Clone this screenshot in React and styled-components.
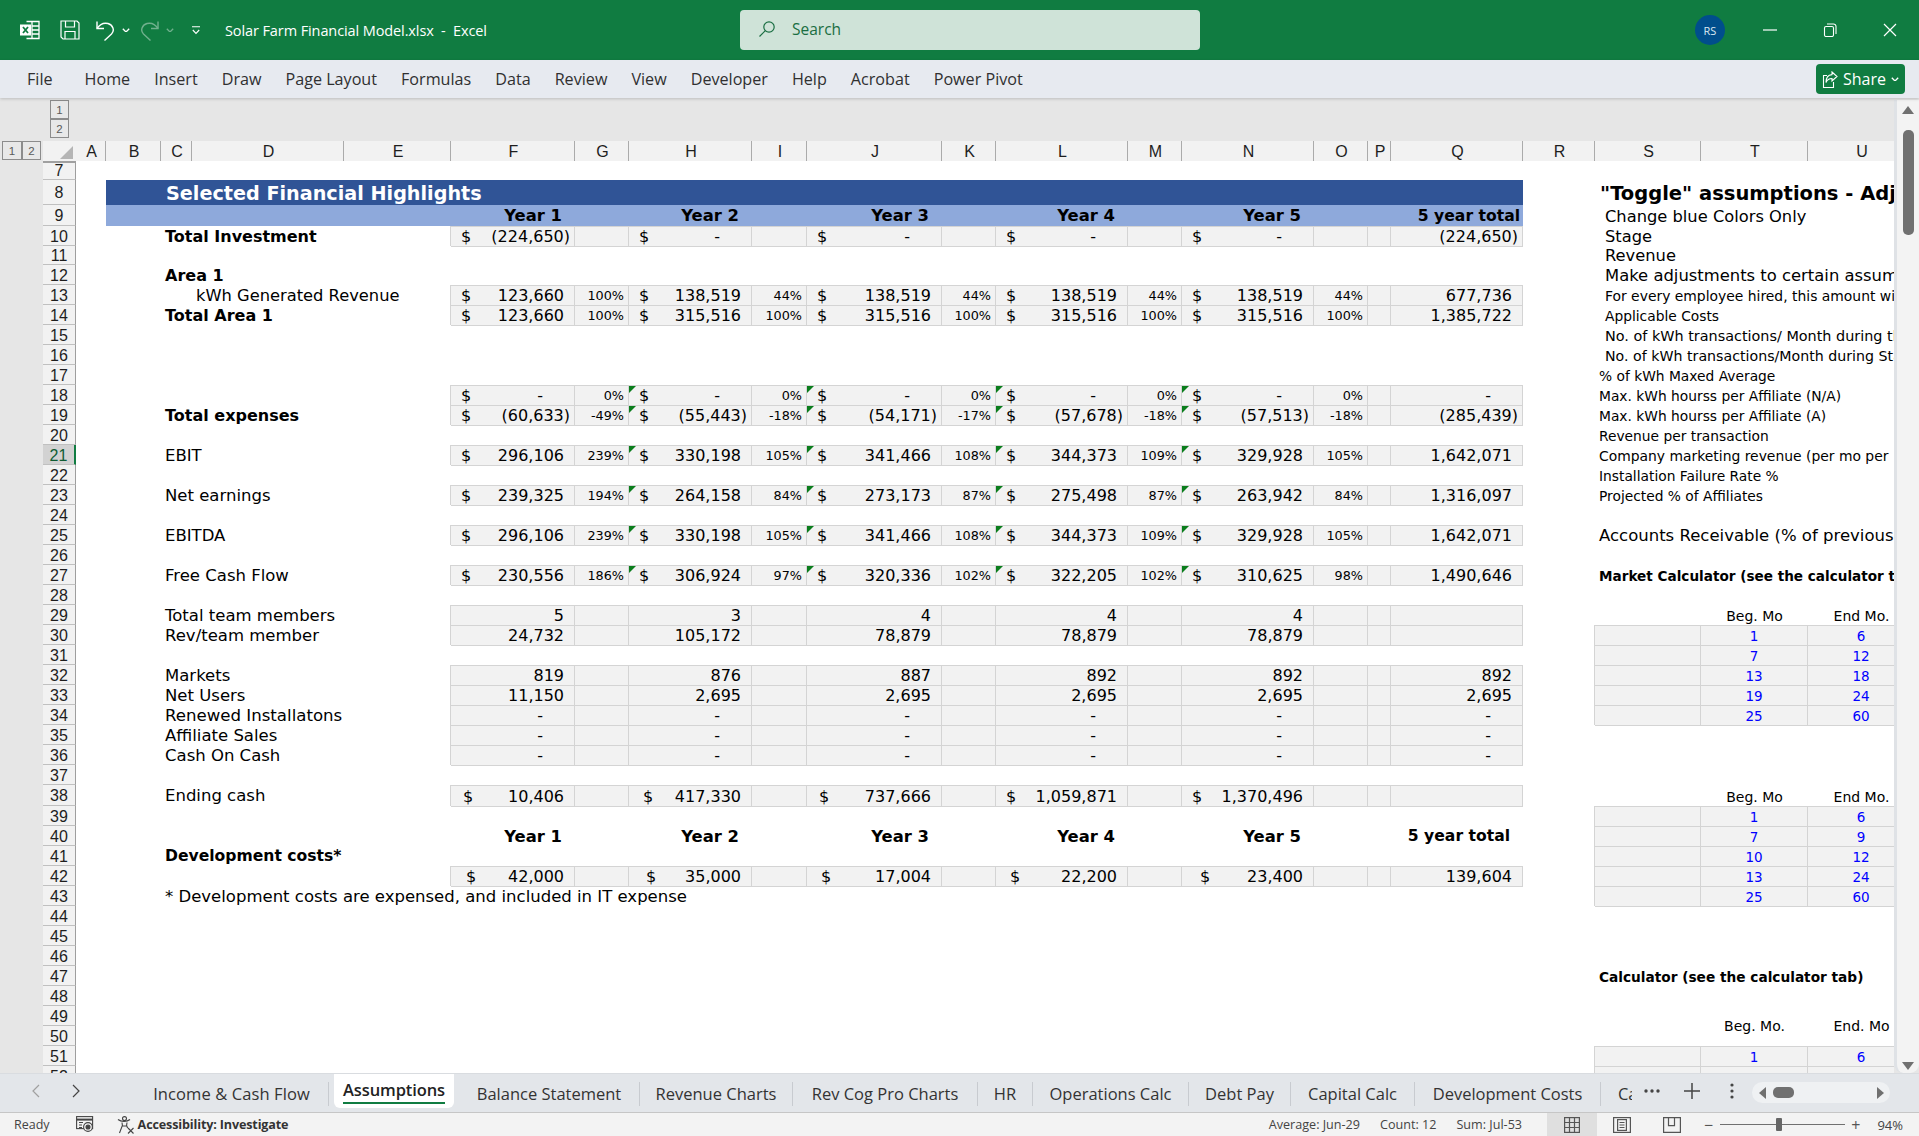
import React from 'react';
import styled, { createGlobalStyle } from 'styled-components';

const GlobalStyle = createGlobalStyle`
  html, body { margin: 0; padding: 0; width: 1919px; height: 1136px; overflow: hidden; background: #fff; }
  * { box-sizing: border-box; }
`;

const UI = `"Open Sans", "Noto Sans", sans-serif`;
const SHEET = `"DejaVu Sans", Verdana, sans-serif`;
const HEAD = `"Liberation Sans", Arial, sans-serif`;
const GREEN = '#107c41';

const COLS = ['A','B','C','D','E','F','G','H','I','J','K','L','M','N','O','P','Q','R','S','T','U'];
const WIDTHS = [30,55,31,152,107,124,54,123,55,135,54,132,54,132,54,23,132,72,106,107,107];
const TEMPLATE = `43px 33px ${WIDTHS.map((w) => `${w}px`).join(' ')}`;
const idx = (c) => COLS.indexOf(c) + 3;

const Page = styled.div`
  width: 1919px; height: 1136px; display: flex; flex-direction: column; overflow: hidden; background: #fff;
`;

/* Title bar */
const TitleBar = styled.header`
  height: 60px; flex: none; background: ${GREEN}; display: flex; align-items: center; color: #fff; padding-left: 20px;
`;
const QuickIcons = styled.div`
  display: flex; align-items: center; width: 205px; flex: none;
`;
const IconSlot = styled.span`
  display: inline-flex; align-items: center; justify-content: center; flex: none;
  width: ${(p) => p.$w}px; margin-left: ${(p) => p.$ml || 0}px; margin-right: ${(p) => p.$mr || 0}px; opacity: ${(p) => p.$dim ? 0.4 : 1};
`;
const DocTitle = styled.div`
  font: 400 14.5px ${UI}; width: 515px; flex: none; white-space: pre; letter-spacing: -0.1px;
`;
const SearchBox = styled.div`
  width: 460px; height: 40px; flex: none; background: #cfe3d8; border-radius: 4px; display: flex; align-items: center;
  padding: 0 0 2px 18px; gap: 16px; color: #1a6e42; font: 400 15.5px ${UI};
`;
const Avatar = styled.div`
  width: 30px; height: 30px; border-radius: 50%; background: #004e8c; color: #dbe8f3; font: 400 11px ${UI};
  display: flex; align-items: center; justify-content: center; margin-left: 495px; flex: none;
`;
const WinButtons = styled.div`
  display: flex; align-items: center; margin-left: 38px; gap: 46px;
`;

/* Ribbon */
const Ribbon = styled.nav`
  height: 38px; flex: none; background: #e7eaf0; display: flex; align-items: center; padding-left: 27px; gap: 24px;
  font: 400 16.15px ${UI}; color: #303030; position: relative; box-shadow: 0 1px 3px rgba(0,0,0,.18); z-index: 2;
`;
const RibbonTab = styled.span`
  margin-right: ${(p) => p.$mr || 0}px; white-space: nowrap;
`;
const ShareButton = styled.button`
  margin-left: auto; margin-right: 14px; width: 89px; height: 30px; background: ${GREEN}; color: #fff; border: 0; border-radius: 4px;
  display: flex; align-items: center; justify-content: center; gap: 5px; padding: 0; font: 400 16px ${UI};
`;

/* Sheet */
const Main = styled.main`
  height: 975px; flex: none; display: flex; background: #e6e6e6;
`;
const SheetArea = styled.section`
  width: 1894px; flex: none; display: flex; flex-direction: column; overflow: hidden;
`;
const OutlineBar = styled.div`
  height: 43px; flex: none; padding: 2px 0 0 50px; display: flex; flex-direction: column;
`;
const OutlineBtn = styled.span`
  width: ${(p) => p.$w || 19}px; height: ${(p) => p.$h || 19}px; border: 1px solid #8c8c8c; background: #e8e8e8; color: #5a5a5a;
  font: 400 11.5px ${HEAD}; display: flex; align-items: center; justify-content: center; flex: none;
`;
const ColHeadRow = styled.div`
  height: 20px; flex: none; display: grid; grid-template-columns: ${TEMPLATE}; background: #e6e6e6;
`;
const OutlinePair = styled.div`
  display: flex; padding-left: 2px; height: 19px;
`;
const Corner = styled.div`
  background: #f2f2f2; border-bottom: 2px solid #a0a0a0; position: relative; overflow: hidden;
  &::after { content: ''; position: absolute; right: 3px; bottom: 2px; width: 0; height: 0;
    border-left: 13px solid transparent; border-bottom: 13px solid #b5b5b5; }
`;
const ColHead = styled.div`
  background: #f2f2f2; border-right: 1px solid #ababab; border-bottom: 2px solid #a0a0a0; color: #1e1e1e;
  font: 400 16px ${HEAD}; display: flex; align-items: center; justify-content: center; padding: 2px 0 0 2px;
`;
const Body = styled.div`
  flex: 1; min-height: 0; overflow: hidden; background: #fff; display: flex; flex-direction: column;
`;
const Row = styled.div`
  height: ${(p) => p.$h}px; flex: none; display: grid; grid-template-columns: ${TEMPLATE}; grid-template-rows: ${(p) => p.$h}px;
`;
const Gutter = styled.div`
  grid-column: 1; background: #e6e6e6;
`;
const RowNum = styled.div`
  grid-column: 2; grid-row: 1; background: ${(p) => p.$sel ? '#d2d2d2' : '#f2f2f2'}; color: ${(p) => p.$sel ? '#0f5c33' : '#1e1e1e'};
  border-bottom: 1px solid #c0c0c0; border-right: ${(p) => p.$sel ? `2px solid ${GREEN}` : '1px solid #9e9e9e'};
  font: 400 16px/${(p) => p.$h + 1}px ${HEAD}; text-align: center;
`;
const Cell = styled.div`
  grid-column: ${(p) => p.$col} / span ${(p) => p.$span || 1};
  grid-row: 1;
  position: relative; white-space: nowrap; min-width: 0; height: 100%;
  display: flex; align-items: center; justify-content: ${(p) => p.$just || 'flex-start'};
  padding: ${(p) => p.$pt ?? 2}px ${(p) => p.$pr ?? 0}px 0 ${(p) => p.$pl ?? 0}px;
  font: ${(p) => p.$bold ? 700 : 400} ${(p) => p.$size || 16}px/1 ${SHEET};
  color: ${(p) => p.$color || '#000'};
  background: ${(p) => p.$fill || 'transparent'};
  ${(p) => p.$grid && `
    background: #f2f2f2;
    border-right: 1px solid #d4d4d4;
    box-shadow: inset 0 1px 0 #d4d4d4, 0 1px 0 #d4d4d4, -1px 0 0 #d4d4d4;
  `}
  ${(p) => p.$tall && `align-items: flex-start; height: 40px; padding-top: 13px; overflow: visible;`}
`;
const Flag = styled.i`
  position: absolute; left: 0; top: 1px; width: 0; height: 0; z-index: 2;
  border-top: 7px solid #0a7d1c; border-right: 7px solid transparent;
`;
const Dollar = styled.span`
  flex: none;
`;
const Amount = styled.span`
  margin-left: auto;
`;

/* scroll */
const VScroll = styled.aside`
  width: 25px; flex: none; background: #f3f3f3; border-left: 3px solid #dfe2e6; margin-top: 2px; border-radius: 0 0 9px 9px;
  display: flex; flex-direction: column; align-items: center; padding-top: 6px;
`;
const VThumb = styled.div`
  width: 11px; height: 105px; background: #707070; border-radius: 5px; margin-top: 16px;
`;
const Arrow = styled.i`
  width: 0; height: 0; flex: none; display: block;
  border-left: 6px solid transparent; border-right: 6px solid transparent;
  ${(p) => p.$down ? 'border-top: 8px solid #707070; margin-top: auto; margin-bottom: 3px;' : 'border-bottom: 8px solid #707070;'}
`;

/* Tabs */
const TabBar = styled.div`
  height: 40px; flex: none; background: #e3e6ea; border-top: 1px solid #d9dce0; border-bottom: 1px solid #c6c6c6; display: flex; position: relative;
`;
const TabNav = styled.div`
  width: 135px; flex: none; display: flex; align-items: center; padding: 0 0 4px 32px; gap: 32px;
`;
const Tabs = styled.div`
  width: 1497px; flex: none; display: flex; overflow: hidden; align-items: flex-start;
`;
const SheetTab = styled.div`
  flex: none; width: ${(p) => p.$w}px; height: 24px; margin-top: 8px; border-right: 1px solid #c8cbd0; color: #333; text-align: center;
  font: 400 16.5px/24px ${UI}; white-space: nowrap; letter-spacing: ${(p) => p.$ls ?? -0.1}px;
`;
const LastTab = styled.div`
  flex: none; height: 24px; margin-top: 8px; padding-left: 17px; color: #333;
  font: 400 16.5px/24px ${UI}; white-space: nowrap; letter-spacing: -0.1px;
`;
const ActiveTab = styled.div`
  flex: none; width: 120px; height: 35px; margin: -1px 5px 0 5px; background: #fff; border-radius: 0 0 6px 6px; text-align: center;
  color: #222; font: 600 16.5px/33px ${UI}; white-space: nowrap; position: relative; letter-spacing: -0.1px;
  &::after { content: ''; position: absolute; left: 9px; right: 9px; bottom: 4px; height: 2px; background: ${GREEN}; }
`;
const TabTools = styled.div`
  flex: 1; display: flex; align-items: center; padding-bottom: 4px; position: relative;
`;
const Pill = styled.div`
  position: absolute; right: 29px; top: 8px; width: 138px; height: 21px; border-radius: 11px; background: #eff1f3;
  display: flex; align-items: center; padding: 0 6px 0 7px;
`;
const HThumb = styled.div`
  width: 21px; height: 11px; background: #707070; border-radius: 5px; margin-left: 7px;
`;
const HArrow = styled.i`
  width: 0; height: 0; display: block; flex: none;
  border-top: 6px solid transparent; border-bottom: 6px solid transparent;
  ${(p) => p.$right ? 'border-left: 7px solid #707070; margin-left: auto;' : 'border-right: 7px solid #707070;'}
`;
const DotsIcon = styled.svg`
  margin-left: ${(p) => p.$ml}px; flex: none;
`;

/* Status */
const StatusBar = styled.footer`
  height: 23px; flex: none; background: #f3f3f3; display: flex; align-items: center; font: 400 12.5px ${UI}; color: #444; padding-left: 14px; position: relative;
`;
const StatusBold = styled.span`
  font-weight: 700; color: #333; letter-spacing: -0.15px; font-size: 12.6px;
`;
const StatusGroup = styled.div`
  display: flex; align-items: center; margin-left: auto; height: 100%; font-size: 12.6px;
`;
const Stat = styled.span`
  margin-right: ${(p) => p.$mr}px;
`;
const ViewBtn = styled.span`
  width: 50px; height: 100%; display: flex; align-items: center; justify-content: center; flex: none;
  background: ${(p) => p.$on ? '#dfdfdf' : 'transparent'};
`;
const Zoom = styled.div`
  display: flex; align-items: center; margin-left: 7px; color: #555; font-size: 16px; line-height: 1;
`;
const Slider = styled.div`
  width: 125px; height: 1px; background: #707070; position: relative; margin: 0 6px 0 7px;
`;
const SliderThumb = styled.i`
  position: absolute; left: 56px; top: -6px; width: 6px; height: 13px; background: #666; border-radius: 1px;
`;
const Percent = styled.span`
  margin: 0 16px 0 17px; color: #444; font-size: 13px;
`;

/* ---------- icons ---------- */
const ExcelLogo = () => (
  <svg width="20" height="20" viewBox="0 0 20 20" fill="none">
    <path d="M6.5 1.5H19v17H6.5" stroke="#fff" strokeWidth="1.3" />
    <path d="M12 1.5v17M12 6h7M12 10h7M12 14h7" stroke="#fff" strokeWidth="1.3" />
    <rect x="0" y="4.5" width="11" height="11" fill="#fff" />
    <path d="M3 7l5 6M8 7l-5 6" stroke={GREEN} strokeWidth="1.8" />
  </svg>
);
const SaveIcon = () => (
  <svg width="20" height="20" viewBox="0 0 20 20" fill="none" stroke="#fff" strokeWidth="1.2">
    <path d="M1 1h16l2 2v16H3l-2-2z" />
    <path d="M5.5 1v6h9V1M5 19v-7.5h10V19" />
  </svg>
);
const UndoIcon = ({ flip }) => (
  <svg width="19" height="21" viewBox="0 0 19 21" fill="none" stroke="#fff" strokeWidth="1.4" style={flip ? { transform: 'scaleX(-1)' } : undefined}>
    <path d="M1 1.5v7h7" />
    <path d="M1 8.5C4 4 8 2.5 12 3.5c5 1.5 7 7 3.5 10.5L8.5 20.5" />
  </svg>
);
const Chevron = ({ size = 8, color = '#fff', sw = 1.3 }) => (
  <svg width={size} height={size * 0.6} viewBox="0 0 10 6" fill="none" stroke={color} strokeWidth={sw * 10 / size}>
    <path d="M1 1l4 4 4-4" />
  </svg>
);
const CustomizeIcon = () => (
  <svg width="10" height="9" viewBox="0 0 10 9" fill="none" stroke="#fff" strokeWidth="1.1">
    <path d="M1 .8h8M1.8 4l3.2 3.4L8.2 4" />
  </svg>
);
const SearchIcon = () => (
  <svg width="18" height="18" viewBox="0 0 18 18" fill="none" stroke="#1a6e42" strokeWidth="1.2">
    <circle cx="11" cy="7" r="5.2" />
    <path d="M7.3 10.7L1.5 16.5" />
  </svg>
);
const MinIcon = () => <svg width="14" height="2" viewBox="0 0 14 2"><path d="M0 1h14" stroke="#fff" strokeWidth="1.2" /></svg>;
const RestoreIcon = () => (
  <svg width="14" height="14" viewBox="0 0 14 14" fill="none" stroke="#fff" strokeWidth="1.1">
    <rect x="1.5" y="3.5" width="9" height="10" rx="1.5" />
    <path d="M4 1h6.5a2.5 2.5 0 0 1 2.5 2.5V11" />
  </svg>
);
const CloseIcon = () => (
  <svg width="14" height="14" viewBox="0 0 14 14" stroke="#fff" strokeWidth="1.2"><path d="M1 1l12 12M13 1L1 13" /></svg>
);
const ShareIcon = () => (
  <svg width="16" height="17" viewBox="0 0 16 17" fill="none" stroke="#fff" strokeWidth="1.1">
    <path d="M5 4.5H1.5v12h10V11" />
    <path d="M10 1l5 4.5L10 10V7.5C7 7.5 5 9 4 11.5 4 7 6 3.8 10 3.6z" />
  </svg>
);
const NavArrow = ({ dir, color }) => (
  <svg width="8" height="14" viewBox="0 0 8 14" fill="none" stroke={color} strokeWidth="1.2">
    <path d={dir === 'l' ? 'M7 1L1 7l6 6' : 'M1 1l6 6-6 6'} />
  </svg>
);
const MacroIcon = () => (
  <svg width="18" height="17" viewBox="0 0 18 17" fill="none" stroke="#444" strokeWidth="1.1">
    <rect x=".6" y=".6" width="16" height="12" />
    <path d="M.6 3.6h16" strokeWidth="2" />
    <path d="M3 6.5h4M3 9h3M3 11.5h3" />
    <circle cx="12" cy="11" r="4.4" fill="#f3f3f3" />
    <circle cx="12" cy="11" r="2" fill="#444" />
  </svg>
);
const AccessIcon = () => (
  <svg width="18" height="18" viewBox="0 0 18 18" fill="none" stroke="#444" strokeWidth="1.1">
    <circle cx="7.5" cy="2.6" r="2" />
    <path d="M1 3.5c3 2.6 9 2.6 12 0M5 6.5l.4 3L2.5 17M10 6.5l-.4 3 1 2.5M5.5 10h4" />
    <path d="M11 12l5.5 5.5M16.5 12L11 17.5" />
  </svg>
);
const GridIcon = () => (
  <svg width="16" height="16" viewBox="0 0 16 16" fill="none" stroke="#555" strokeWidth="1.2">
    <rect x=".6" y=".6" width="14.8" height="14.8" />
    <path d="M5.5 .6v14.8M10.5 .6v14.8M.6 5.5h14.8M.6 10.5h14.8" />
  </svg>
);
const PageIcon = () => (
  <svg width="18" height="16" viewBox="0 0 18 16" fill="none" stroke="#555" strokeWidth="1.2">
    <rect x=".6" y=".6" width="16.8" height="14.8" />
    <rect x="4.6" y="2.6" width="8.8" height="10.8" />
    <path d="M6.5 5.5h5M6.5 8h5M6.5 10.5h5" />
  </svg>
);
const BreakIcon = () => (
  <svg width="18" height="16" viewBox="0 0 18 16" fill="none" stroke="#555" strokeWidth="1.2">
    <path d="M.6 15.4V.6h16.8v14.8z" />
    <path d="M5.5 .6v8h6V.6" />
  </svg>
);

/* ---------- data ---------- */
const MONEY = ['F', 'H', 'J', 'L', 'N'];
const PCT = ['G', 'I', 'K', 'M', 'O'];
const BLOCK = ['F','G','H','I','J','K','L','M','N','O','P','Q'];
const pad = (v) => (v === '-' ? 31 : v.endsWith(')') ? 4 : 10);

const numbers = {
  10: { m: ['(224,650)', '-', '-', '-', '-'], q: '(224,650)' },
  13: { m: ['123,660', '138,519', '138,519', '138,519', '138,519'], p: ['100%', '44%', '44%', '44%', '44%'], q: '677,736' },
  14: { m: ['123,660', '315,516', '315,516', '315,516', '315,516'], p: ['100%', '100%', '100%', '100%', '100%'], q: '1,385,722' },
  18: { m: ['-', '-', '-', '-', '-'], p: ['0%', '0%', '0%', '0%', '0%'], q: '-', flags: true },
  19: { m: ['(60,633)', '(55,443)', '(54,171)', '(57,678)', '(57,513)'], p: ['-49%', '-18%', '-17%', '-18%', '-18%'], q: '(285,439)', flags: true },
  21: { m: ['296,106', '330,198', '341,466', '344,373', '329,928'], p: ['239%', '105%', '108%', '109%', '105%'], q: '1,642,071', flags: true },
  23: { m: ['239,325', '264,158', '273,173', '275,498', '263,942'], p: ['194%', '84%', '87%', '87%', '84%'], q: '1,316,097', flags: true },
  25: { m: ['296,106', '330,198', '341,466', '344,373', '329,928'], p: ['239%', '105%', '108%', '109%', '105%'], q: '1,642,071', flags: true },
  27: { m: ['230,556', '306,924', '320,336', '322,205', '310,625'], p: ['186%', '97%', '102%', '102%', '98%'], q: '1,490,646', flags: true },
  29: { m: ['5', '3', '4', '4', '4'], q: '', plain: true },
  30: { m: ['24,732', '105,172', '78,879', '78,879', '78,879'], q: '', plain: true },
  32: { m: ['819', '876', '887', '892', '892'], q: '892', plain: true },
  33: { m: ['11,150', '2,695', '2,695', '2,695', '2,695'], q: '2,695', plain: true },
  34: { m: ['-', '-', '-', '-', '-'], q: '-', plain: true },
  35: { m: ['-', '-', '-', '-', '-'], q: '-', plain: true },
  36: { m: ['-', '-', '-', '-', '-'], q: '-', plain: true },
  38: { m: ['10,406', '417,330', '737,666', '1,059,871', '1,370,496'], q: '', dollarPad: [12, 14, 12, 10, 10] },
  42: { m: ['42,000', '35,000', '17,004', '22,200', '23,400'], q: '139,604', dollarPad: [15, 17, 14, 14, 18] },
};

const labels = {
  10: ['C', 'Total Investment', 16, true], 12: ['C', 'Area 1', 16, true], 13: ['D', 'kWh Generated Revenue', 16.3],
  14: ['C', 'Total Area 1', 16, true], 19: ['C', 'Total expenses', 16, true], 21: ['C', 'EBIT', 16.5], 23: ['C', 'Net earnings', 16.5],
  25: ['C', 'EBITDA', 16.5], 27: ['C', 'Free Cash Flow', 16.5], 29: ['C', 'Total team members', 16.5], 30: ['C', 'Rev/team member', 16.5],
  32: ['C', 'Markets', 16.5], 33: ['C', 'Net Users', 16.5], 34: ['C', 'Renewed Installatons', 16.6], 35: ['C', 'Affiliate Sales', 16.5],
  36: ['C', 'Cash On Cash', 16.5], 38: ['C', 'Ending cash', 16.5], 41: ['C', 'Development costs*', 15.6, true],
  43: ['C', '* Development costs are expensed, and included in IT expense', 16.5],
};

const side = {
  8: ['"Toggle" assumptions - Adjustments', 5, 19.5, true, 2],
  9: ['Change blue Colors Only', 10, 16.3, false, 3],
  10: ['Stage', 10, 16.3, false, 2],
  11: ['Revenue', 10, 16.3, false, 1],
  12: ['Make adjustments to certain assumptions', 10, 16.4, false, 2],
  13: ['For every employee hired, this amount will', 10, 13.9, false, 3],
  14: ['Applicable Costs', 10, 13.8, false, 3],
  15: ['No. of kWh transactions/ Month during the', 10, 14.4, false, 3],
  16: ['No. of kWh transactions/Month during Stage', 10, 14.2, false, 3],
  17: ['% of kWh Maxed Average', 4, 13.8, false, 4],
  18: ['Max. kWh hourss per Affiliate (N/A)', 4, 13.8, false, 3],
  19: ['Max. kWh hourss per Affiliate (A)', 4, 13.8, false, 4],
  20: ['Revenue per transaction', 4, 13.8, false, 3],
  21: ['Company marketing revenue (per mo per', 4, 13.9, false, 3],
  22: ['Installation Failure Rate %', 4, 13.8, false, 3],
  23: ['Projected % of Affiliates', 4, 13.8, false, 3],
  25: ['Accounts Receivable (% of previous month)', 4, 16.5, false, 3],
  27: ['Market Calculator (see the calculator tab)', 4, 13.6, true, 3],
  47: ['Calculator (see the calculator tab)', 4, 13.7, true, 3],
};

const tables = {
  30: ['1', '6'], 31: ['7', '12'], 32: ['13', '18'], 33: ['19', '24'], 34: ['25', '60'],
  39: ['1', '6'], 40: ['7', '9'], 41: ['10', '12'], 42: ['13', '24'], 43: ['25', '60'],
  51: ['1', '6'], 52: ['', ''],
};
const tableHeads = { 29: ['Beg. Mo', 'End Mo.'], 38: ['Beg. Mo', 'End Mo.'] };

const rowHeight = (n) => {
  if (n === 7) return 19;
  if (n === 8) return 25;
  if (n === 9) return 21;
  if (n === 11) return 19;
  if (n === 38) return 21;
  return 20;
};

const YEARS = ['Year 1', 'Year 2', 'Year 3', 'Year 4', 'Year 5'];

const renderNumbers = (n) => {
  const d = numbers[n];
  if (!d) return null;
  return BLOCK.map((c) => {
    const mi = MONEY.indexOf(c);
    const pi = PCT.indexOf(c);
    if (mi >= 0) {
      const v = d.m[mi];
      return (
        <Cell key={c} $grid $col={idx(c)} $pl={d.dollarPad ? d.dollarPad[mi] : 10} $pr={pad(v)}>
          {d.flags && mi > 0 && <Flag />}
          {!d.plain && <Dollar>$</Dollar>}
          <Amount>{v}</Amount>
        </Cell>
      );
    }
    if (pi >= 0) {
      return (
        <Cell key={c} $grid $col={idx(c)} $size={12.8} $pr={4} $pt={3} $just="flex-end">{d.p ? d.p[pi] : ''}</Cell>
      );
    }
    if (c === 'Q') {
      return <Cell key={c} $grid $col={idx(c)} $pr={d.q ? pad(d.q) : 0} $just="flex-end">{d.q}</Cell>;
    }
    return <Cell key={c} $grid $col={idx(c)} />;
  });
};

const renderRow = (n) => {
  const label = labels[n];
  const s = side[n];
  const t = tables[n];
  const th = tableHeads[n];
  const h = rowHeight(n);
  return (
    <Row key={n} $h={h}>
      <Gutter />
      <RowNum $sel={n === 21} $h={h}>{n}</RowNum>
      {n === 8 && (
        <Cell $col={idx('B')} $span={16} $fill="#305496" $color="#fff" $bold $size={19.2} $pl={60} $pt={3}>Selected Financial Highlights</Cell>
      )}
      {n === 9 && (
        <>
          <Cell $col={idx('B')} $span={4} $fill="#8ea9db" />
          {BLOCK.map((c) => {
            const mi = MONEY.indexOf(c);
            if (mi >= 0) return <Cell key={c} $col={idx(c)} $fill="#8ea9db" $bold $size={16.4} $just="flex-end" $pr={13}>{YEARS[mi]}</Cell>;
            if (c === 'Q') return <Cell key={c} $col={idx(c)} $fill="#8ea9db" $bold $size={15.6} $just="flex-end" $pr={3}>5 year total</Cell>;
            return <Cell key={c} $col={idx(c)} $fill="#8ea9db" />;
          })}
        </>
      )}
      {n === 40 && (
        <>
          {MONEY.map((c, i) => <Cell key={c} $col={idx(c)} $bold $size={16.4} $just="flex-end" $pr={13}>{YEARS[i]}</Cell>)}
          <Cell $col={idx('Q')} $bold $size={15.6} $just="flex-end" $pr={13}>5 year total</Cell>
        </>
      )}
      {label && (
        <Cell $col={idx(label[0])} $bold={label[3]} $size={label[2]} $pl={4}>{label[1]}</Cell>
      )}
      {renderNumbers(n)}
      {s && (
        <Cell $col={idx('S')} $bold={s[3]} $size={s[2]} $pl={s[1]} $pt={s[4]}>{s[0]}</Cell>
      )}
      {th && th.map((v, i) => (
        <Cell key={v} $col={idx(i ? 'U' : 'T')} $size={14} $just="center">{v}</Cell>
      ))}
      {n === 49 && (
        <>
          <Cell $tall $col={idx('T')} $size={14} $just="center">Beg. Mo.</Cell>
          <Cell $tall $col={idx('U')} $size={14} $just="center">End. Mo</Cell>
        </>
      )}
      {t && (
        <>
          <Cell $grid $col={idx('S')} />
          <Cell $grid $col={idx('T')} $size={13.5} $pt={3} $color="#0000ff" $just="center">{t[0]}</Cell>
          <Cell $grid $col={idx('U')} $size={13.5} $pt={3} $color="#0000ff" $just="center">{t[1]}</Cell>
        </>
      )}
    </Row>
  );
};

const rowNumbers = Array.from({ length: 46 }, (_, i) => i + 7);
const ribbonTabs = ['Home', 'Insert', 'Draw', 'Page Layout', 'Formulas', 'Data', 'Review', 'View', 'Developer', 'Help', 'Acrobat', 'Power Pivot'];
const sheetTabsAfter = [['Balance Statement', 181], ['Revenue Charts', 153], ['Rev Cog Pro Charts', 185], ['HR', 55], ['Operations Calc', 156], ['Debt Pay', 102], ['Capital Calc', 124], ['Development Costs', 186]];

export default function App() {
  return (
    <Page>
      <GlobalStyle />
      <TitleBar>
        <QuickIcons>
          <IconSlot $w={20} $mr={20}><ExcelLogo /></IconSlot>
          <IconSlot $w={20} $mr={16}><SaveIcon /></IconSlot>
          <IconSlot $w={19} $mr={7}><UndoIcon /></IconSlot>
          <IconSlot $w={8} $mr={10}><Chevron /></IconSlot>
          <IconSlot $w={19} $mr={7} $dim><UndoIcon flip /></IconSlot>
          <IconSlot $w={8} $mr={17} $dim><Chevron /></IconSlot>
          <IconSlot $w={10}><CustomizeIcon /></IconSlot>
        </QuickIcons>
        <DocTitle>Solar Farm Financial Model.xlsx  -  Excel</DocTitle>
        <SearchBox><SearchIcon />Search</SearchBox>
        <Avatar>RS</Avatar>
        <WinButtons>
          <MinIcon />
          <RestoreIcon />
          <CloseIcon />
        </WinButtons>
      </TitleBar>
      <Ribbon>
        <RibbonTab $mr={8}>File</RibbonTab>
        {ribbonTabs.map((t) => <RibbonTab key={t}>{t}</RibbonTab>)}
        <ShareButton><ShareIcon />Share<Chevron size={8} /></ShareButton>
      </Ribbon>
      <Main>
        <SheetArea>
          <OutlineBar>
            <OutlineBtn>1</OutlineBtn>
            <OutlineBtn>2</OutlineBtn>
          </OutlineBar>
          <ColHeadRow>
            <OutlinePair>
              <OutlineBtn $w={20}>1</OutlineBtn>
              <OutlineBtn $w={19}>2</OutlineBtn>
            </OutlinePair>
            <Corner />
            {COLS.map((c) => <ColHead key={c}>{c}</ColHead>)}
          </ColHeadRow>
          <Body>{rowNumbers.map(renderRow)}</Body>
        </SheetArea>
        <VScroll>
          <Arrow />
          <VThumb />
          <Arrow $down />
        </VScroll>
      </Main>
      <TabBar>
        <TabNav>
          <NavArrow dir="l" color="#a0a0a0" />
          <NavArrow dir="r" color="#444" />
        </TabNav>
        <Tabs>
          <SheetTab $w={194} $ls={0.1}>Income &amp; Cash Flow</SheetTab>
          <ActiveTab>Assumptions</ActiveTab>
          {sheetTabsAfter.map(([t, w]) => <SheetTab key={t} $w={w} $ls={0}>{t}</SheetTab>)}
          <LastTab>Capital</LastTab>
        </Tabs>
        <TabTools>
          <DotsIcon $ml={12} width="16" height="4" viewBox="0 0 16 4"><g fill="#444"><circle cx="2" cy="2" r="1.7" /><circle cx="8" cy="2" r="1.7" /><circle cx="14" cy="2" r="1.7" /></g></DotsIcon>
          <DotsIcon $ml={24} width="16" height="16" viewBox="0 0 16 16"><path d="M8 0v16M0 8h16" stroke="#444" strokeWidth="1.5" /></DotsIcon>
          <DotsIcon $ml={30} width="4" height="16" viewBox="0 0 4 16"><g fill="#444"><circle cx="2" cy="2" r="1.6" /><circle cx="2" cy="8" r="1.6" /><circle cx="2" cy="14" r="1.6" /></g></DotsIcon>
          <Pill><HArrow /><HThumb /><HArrow $right /></Pill>
        </TabTools>
      </TabBar>
      <StatusBar>
        <span>Ready</span>
        <IconSlot $w={18} $ml={26}><MacroIcon /></IconSlot>
        <IconSlot $w={18} $ml={23} $mr={3}><AccessIcon /></IconSlot>
        <StatusBold>Accessibility: Investigate</StatusBold>
        <StatusGroup>
          <Stat $mr={20}>Average: Jun-29</Stat>
          <Stat $mr={20}>Count: 12</Stat>
          <Stat $mr={25}>Sum: Jul-53</Stat>
          <ViewBtn $on><GridIcon /></ViewBtn>
          <ViewBtn><PageIcon /></ViewBtn>
          <ViewBtn><BreakIcon /></ViewBtn>
          <Zoom>
            <span>&#8722;</span>
            <Slider><SliderThumb /></Slider>
            <span>+</span>
          </Zoom>
          <Percent>94%</Percent>
        </StatusGroup>
      </StatusBar>
    </Page>
  );
}
